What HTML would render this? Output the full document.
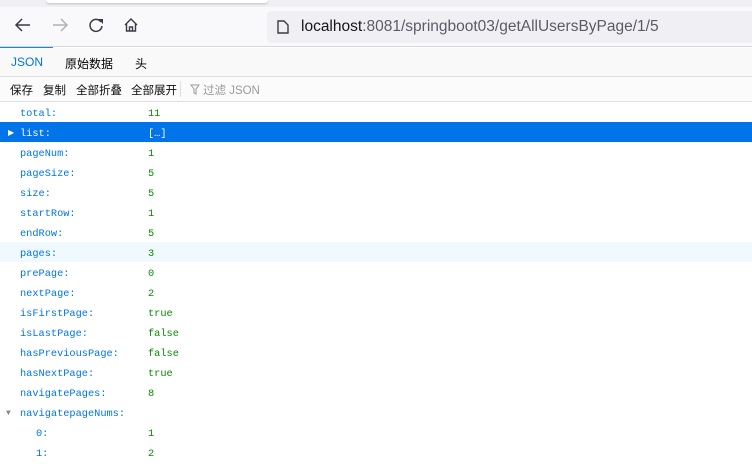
<!DOCTYPE html>
<html><head><meta charset="utf-8"><style>
*{margin:0;padding:0;box-sizing:border-box}
body{width:752px;height:454px;overflow:hidden;background:#fff;font-family:"Liberation Sans","Noto Sans CJK SC",sans-serif;position:relative}
.top{position:absolute;left:0;top:0;width:752px;height:47px;background:#f9f9fb;border-bottom:1px solid #d7d7db}
.tabstrip{position:absolute;left:0;top:0;width:752px;height:7px;background:#f0f0f4}
.tabcur{position:absolute;left:46px;top:0;width:222px;height:3px;background:#fff;border-radius:0 0 4px 4px;box-shadow:0 1px 2px rgba(0,0,0,.2)}
.url{position:absolute;left:267px;top:11px;width:485px;height:32px;background:#f0f0f4;border-radius:4px 0 0 4px;font-size:15.5px;color:#5b5b66;line-height:32px;padding-left:34px}
.url b{font-weight:normal;color:#15141a}
.tabs{position:absolute;left:0;top:48px;width:752px;height:29px;background:#f9f9fa;border-bottom:1px solid #e0e0e2;font-size:12px}
.tabs span{position:absolute;top:7px}
.bar{position:absolute;left:0;top:77px;width:752px;height:25px;background:#fbfbfb;border-bottom:1px solid #e0e0e2;font-size:11.5px;color:#0c0c0d}
.bar span{position:absolute;top:5px}
.row{position:absolute;left:0;width:752px;height:20px;font-family:"Liberation Mono",monospace;font-size:10.3px;line-height:20px}
.row span{top:1.5px}
.k{position:absolute;left:20px;color:#0074e8}
.v{position:absolute;left:148px;color:#058b00}
</style></head><body>
<div class="top"><div class="tabstrip"></div><div class="tabcur"></div>
<svg style="position:absolute;left:14px;top:17px" width="18" height="16" viewBox="0 0 18 16"><path d="M16 8H2M8 2L2 8l6 6" fill="none" stroke="#3b3b44" stroke-width="1.5"/></svg>
<svg style="position:absolute;left:51px;top:17px" width="18" height="16" viewBox="0 0 18 16"><path d="M2 8h14M10 2l6 6-6 6" fill="none" stroke="#b0b0b8" stroke-width="1.5"/></svg>
<svg style="position:absolute;left:88px;top:17px" width="16" height="16" viewBox="0 0 16 16"><path d="M13 5A6 6 0 1 0 14 9" fill="none" stroke="#3b3b44" stroke-width="1.5"/><path d="M10 2h5v5z" fill="#3b3b44"/></svg>
<svg style="position:absolute;left:123px;top:17px" width="16" height="16" viewBox="0 0 16 16"><path d="M2 8L8 2l6 6M3.5 7v7h9V7M6.5 14v-4h3v4" fill="none" stroke="#3b3b44" stroke-width="1.4"/></svg>
<div class="url"><svg style="position:absolute;left:10px;top:9px" width="12" height="14" viewBox="0 0 12 14"><path d="M1 1h6l4 4v8H1z" fill="none" stroke="#3b3b44" stroke-width="1.4"/></svg><b>localhost</b>:8081/springboot03/getAllUsersByPage/1/5</div>
</div>
<div style="position:absolute;left:0;top:47px;width:53px;height:2px;background:#0a84ff"></div>
<div class="tabs"><span style="left:11px;color:#0074e8">JSON</span><span style="left:65px">原始数据</span><span style="left:135px">头</span></div>
<div class="bar"><span style="left:10px">保存</span><span style="left:43px">复制</span><span style="left:76px">全部折叠</span><span style="left:131px">全部展开</span>
<div style="position:absolute;left:180px;top:4px;width:1px;height:16px;background:#e0e0e2"></div>
<svg style="position:absolute;left:190px;top:7px" width="10" height="11" viewBox="0 0 10 11"><path d="M1 1h8L6 5v5L4 9V5z" fill="none" stroke="#999" stroke-width="1"/></svg>
<span style="left:203px;color:#999">过滤 JSON</span></div>
<div class="row" style="top:102px"><span class="k">total:</span><span class="v">11</span></div>
<div class="row" style="top:122px;background:#0074e8"><span style="position:absolute;left:8px;color:#fff;font-size:8px">▶</span><span class="k" style="color:#fff">list:</span><span class="v" style="color:#fff">[…]</span></div>
<div class="row" style="top:142px"><span class="k">pageNum:</span><span class="v">1</span></div>
<div class="row" style="top:162px"><span class="k">pageSize:</span><span class="v">5</span></div>
<div class="row" style="top:182px"><span class="k">size:</span><span class="v">5</span></div>
<div class="row" style="top:202px"><span class="k">startRow:</span><span class="v">1</span></div>
<div class="row" style="top:222px"><span class="k">endRow:</span><span class="v">5</span></div>
<div class="row" style="top:242px;background:#f0f9fe"><span class="k">pages:</span><span class="v">3</span></div>
<div class="row" style="top:262px"><span class="k">prePage:</span><span class="v">0</span></div>
<div class="row" style="top:282px"><span class="k">nextPage:</span><span class="v">2</span></div>
<div class="row" style="top:302px"><span class="k">isFirstPage:</span><span class="v">true</span></div>
<div class="row" style="top:322px"><span class="k">isLastPage:</span><span class="v">false</span></div>
<div class="row" style="top:342px"><span class="k">hasPreviousPage:</span><span class="v">false</span></div>
<div class="row" style="top:362px"><span class="k">hasNextPage:</span><span class="v">true</span></div>
<div class="row" style="top:382px"><span class="k">navigatePages:</span><span class="v">8</span></div>
<div class="row" style="top:402px"><span style="position:absolute;left:6px;color:#888;font-size:8px">▼</span><span class="k">navigatepageNums:</span></div>
<div class="row" style="top:422px"><span class="k" style="left:36px">0:</span><span class="v">1</span></div>
<div class="row" style="top:442px"><span class="k" style="left:36px">1:</span><span class="v">2</span></div>
</body></html>
